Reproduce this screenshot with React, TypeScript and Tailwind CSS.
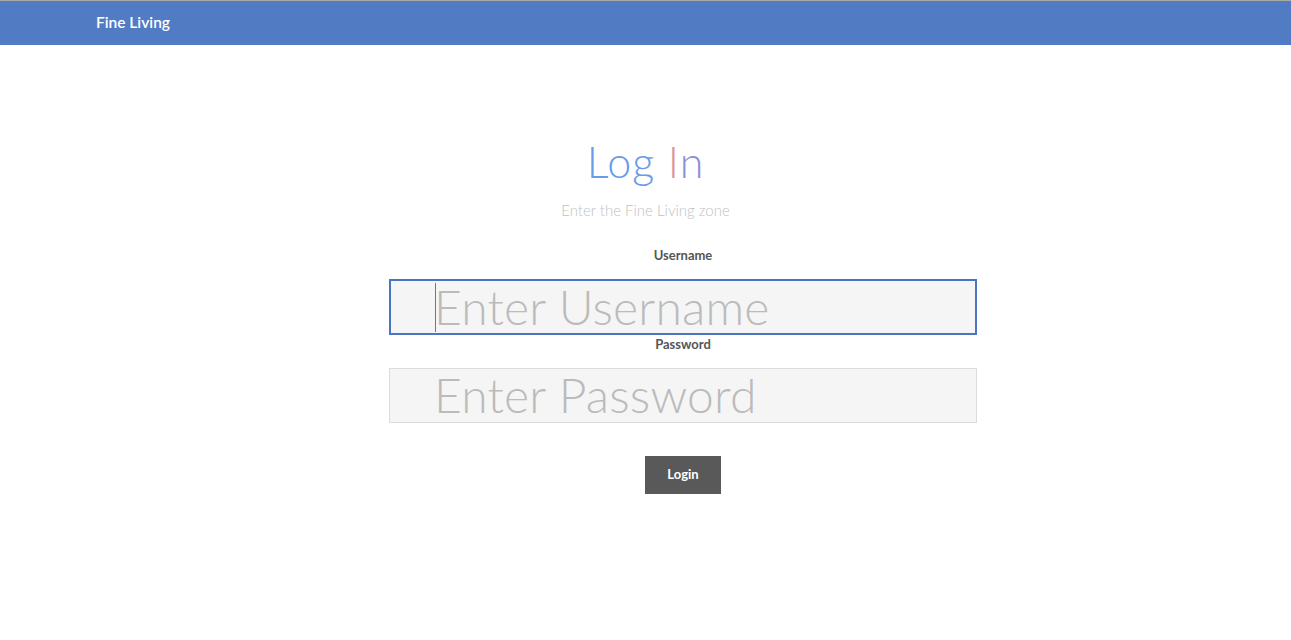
import React from 'react';

const App = () => {
  return (
    <div className="min-h-[640px] bg-white" style={{ fontFamily: 'Lato, "Open Sans", sans-serif' }}>
      {/* top bar */}
      <div className="border-t border-[#a9a9a9] bg-[#517bc3] h-[45px] flex items-center">
        <span className="ml-[96px] text-white text-[15.5px] font-semibold">Fine Living</span>
      </div>

      <div className="flex flex-col items-center pt-[95px]">
        <h1 className="text-[43px] font-light leading-none tracking-[1px]">
          <span className="text-[#6a9be6]">Log </span>
          <span className="text-[#d99a9a]">I</span>
          <span className="text-[#8f8fd8]">n</span>
        </h1>
        <p className="mt-[16px] text-[15px] font-light text-[#c2c2c2]">Enter the Fine Living zone</p>

        <form className="w-[663px] pl-[75px] mt-[24px] flex flex-col items-center">
          <label className="text-[13px] font-bold text-[#555]">Username</label>
          <div className="mt-[14px] w-[588px] h-[56px] border-2 border-[#4a74c4] bg-[#f5f5f5] flex items-center pl-[43px] relative">
            <span className="absolute left-[44px] top-[2px] w-px h-[49px] bg-[#777]" />
            <input
              className="w-full bg-transparent outline-none text-[48px] font-light tracking-[0.2px] text-[#bbb] placeholder:text-[#bbb]"
              placeholder="Enter Username"
            />
          </div>
          <label className="text-[13px] font-bold text-[#555]">Password</label>
          <div className="mt-[13px] w-[588px] h-[55px] border border-[#dcdcdc] bg-[#f5f5f5] flex items-center pl-[44px]">
            <input
              type="password"
              className="w-full bg-transparent outline-none text-[48px] font-light tracking-[0.2px] text-[#bbb] placeholder:text-[#bbb]"
              placeholder="Enter Password"
            />
          </div>
          <button type="button" className="mt-[33px] w-[76px] h-[38px] bg-[#595959] text-white text-[13px] font-bold">
            Login
          </button>
        </form>
      </div>
    </div>
  );
};

export default App;
